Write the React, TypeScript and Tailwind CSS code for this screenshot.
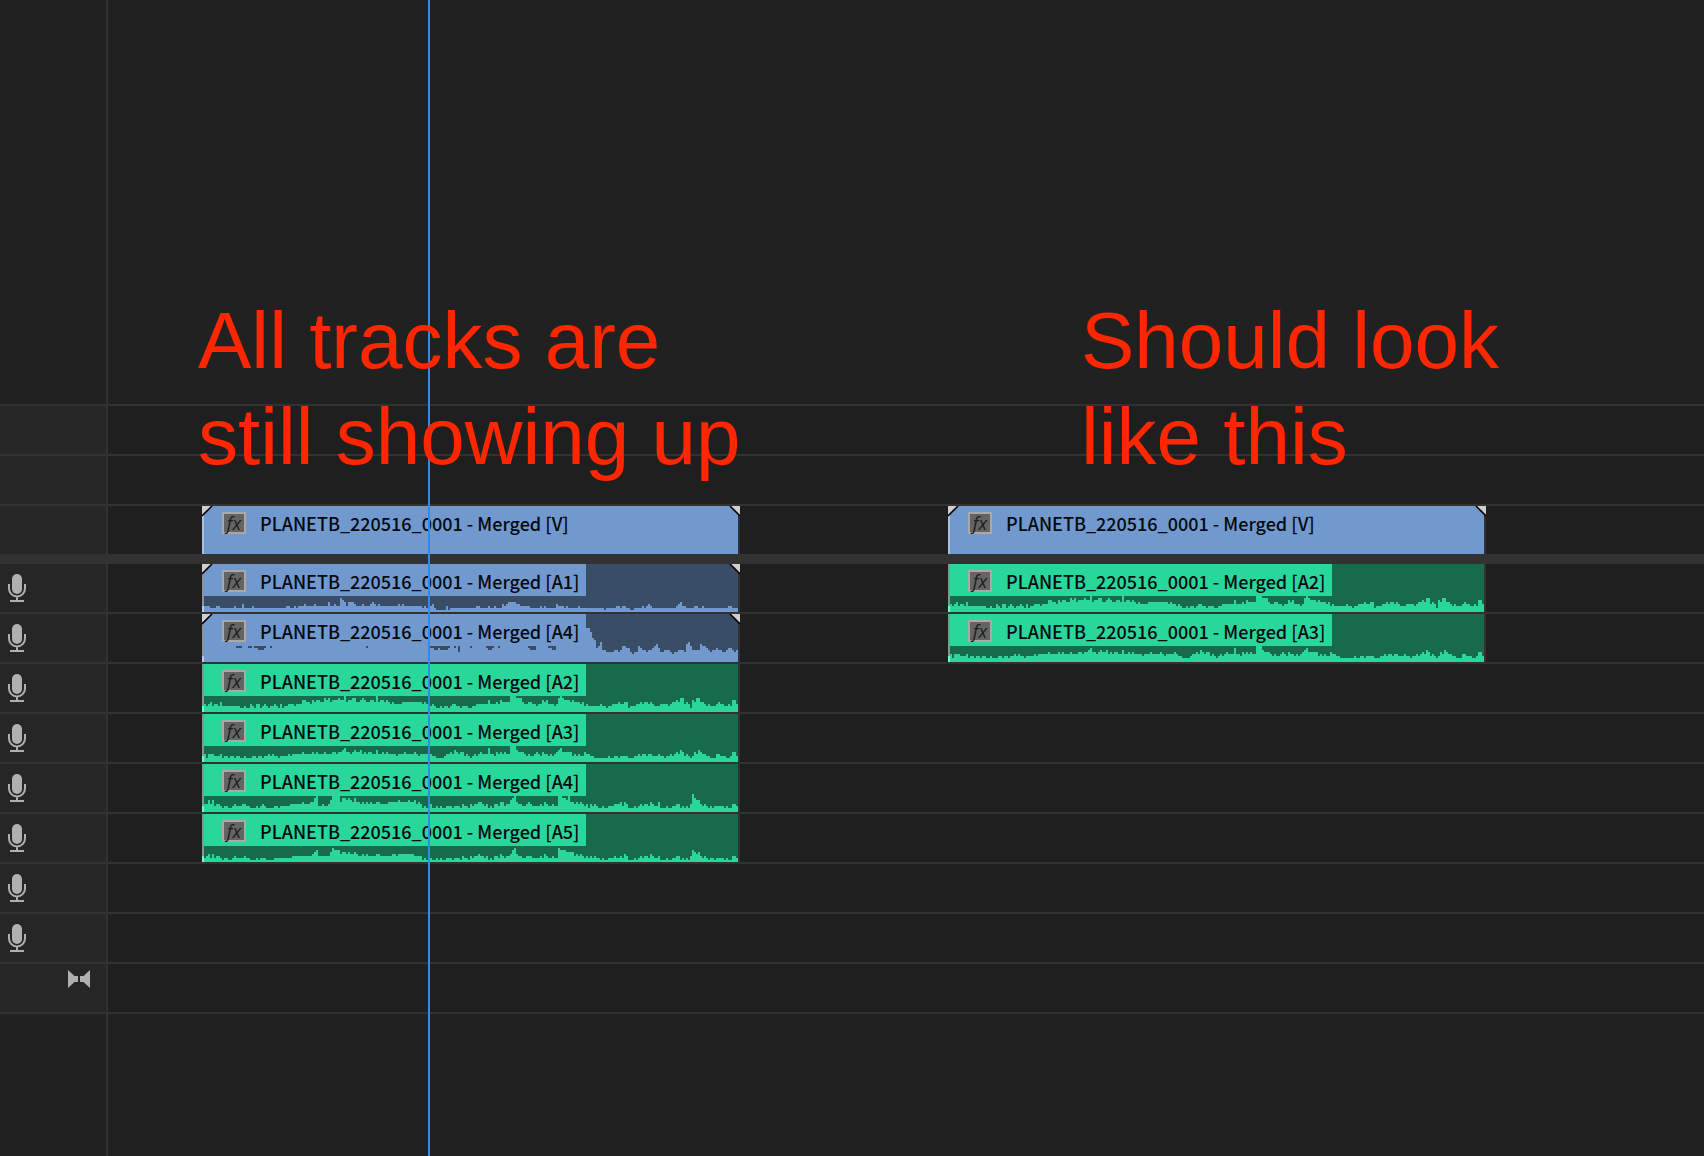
import React from "react";

type ClipColor = "blue" | "green";

interface Clip {
  id: string;
  label: string;
  color: ClipColor;
  handles?: boolean;
  peaks?: string;
}

interface Track {
  id: string;
  clips: Clip[];
  mic?: boolean;
  master?: boolean;
}

// One base-36 digit per waveform column, grouped in tens to keep them readable
const PEAKS_A1 = `
  3332223322 2222232224 2222322222 2222222222 2332232333 4333343333 3353343376 5355543334 3334543433 3333333434
  3333333332 3223421111 1312222222 222
  2223322223 2232224345 5554433333 2222232322 2224333232 2222322222 2222222122 2223323322 1122223234 3222222222
  2223453322 2233223222 2222222223 3222
`;
const PEAKS_A4_BLUE = `
  8888888888 8888887778 8877877666 7887888888 8888888888 8888888888 8888888888 8888888888 8788888888 8888888888
  8888888888 8887766766 6678878588 888
  7888888876 6788788888 8888888887 6668888887 7668888888 88888888hh fcb78a6655 5566568877 5455876656 6789755666
  545566659a 8666698876 5667665567 7656
  5976
`;
const PEAKS_A2 = `
  4345344353 3333333322 3224324423 4323343242 3344434446 6554656655 7675666766 8566775567 6556658566 5654544445
  5555555554 5443432232 3323443323 332
  2334444446 4445465555 8887775445 5443446564 4434787666 5655545343 3333343323 3444544552 3334454554 5433344443
  4556577454 2657755434 3334544334 3664
`;
const PEAKS_A3 = `
  4244433342 3323323322 3222332332 3343433233 3343444445 4444545444 5444554556 7554565564 5455446445 4544443444
  5444454344 4454332222 3445465455 343
  2343454447 4435454544 8886555434 3345435443 4345675555 5343433544 3322222223 2233233332 2233434434 4333433233
  4345465343 2354654433 2224433322 3553
`;
const PEAKS_A4 = `
  4464634432 3322343334 4332223234 3222233233 3334444445 4445578334 3346888857 7676575545 4545445544 4455555655
  5565564542 3234223232 2333233324 332
  4344554342 3244355344 6785443345 4333343543 3433887768 5545454342 4343223223 3344453542 2232343443 5433522232
  2334423232 4976643432 3233333232 2443
`;
const PEAKS_A5 = `
  2342423321 2211232222 3221112122 2111122222 2222333333 3333456333 3335766645 5454454334 3433334433 3333443444
  4444433331 2122112121 1222122213 221
  3233433231 2133243233 4674332233 3222232432 2322766655 5534343232 3232212112 2232232431 1121232332 4322311121
  1223312121 3654532321 2212222121 1332
`;

const clip = (id: string, tag: string, color: ClipColor, peaks?: string, handles?: boolean): Clip => ({
  id,
  label: `PLANETB_220516_0001 - Merged [${tag}]`,
  color,
  peaks,
  handles,
});

const videoTracks: Track[] = [
  { id: "V3", clips: [] },
  { id: "V2", clips: [] },
  { id: "V1", clips: [clip("v-left", "V", "blue", undefined, true), clip("v-right", "V", "blue", undefined, true)] },
];

const audioTracks: Track[] = [
  { id: "A1", mic: true, clips: [clip("a1", "A1", "blue", PEAKS_A1, true), clip("a2-right", "A2", "green", PEAKS_A2)] },
  { id: "A2", mic: true, clips: [clip("a4-blue", "A4", "blue", PEAKS_A4_BLUE, true), clip("a3-right", "A3", "green", PEAKS_A3)] },
  { id: "A3", mic: true, clips: [clip("a2", "A2", "green", PEAKS_A2)] },
  { id: "A4", mic: true, clips: [clip("a3", "A3", "green", PEAKS_A3)] },
  { id: "A5", mic: true, clips: [clip("a4", "A4", "green", PEAKS_A4)] },
  { id: "A6", mic: true, clips: [clip("a5", "A5", "green", PEAKS_A5)] },
  { id: "A7", mic: true, clips: [] },
  { id: "A8", mic: true, clips: [] },
  { id: "Mix", master: true, clips: [] },
];

function MicIcon() {
  return (
    <svg width="18" height="28" viewBox="0 0 18 28" fill="none" aria-hidden="true">
      <rect x="4" y="0" width="10" height="20" rx="5" fill="#b0b0b0" />
      <path d="M1 10v4.500a8 8 0 0 0 16 0V10M9 22.500V27M2 27h14" stroke="#b0b0b0" strokeWidth="2" />
    </svg>
  );
}

function MasterIcon() {
  return (
    <svg width="22" height="18" viewBox="0 0 22 18" fill="#b0b0b0" aria-hidden="true">
      <path d="M0 0l6.500 6H10v6H6.500L0 18z" />
      <path d="M22 0l-6.500 6H12v6h3.500L22 18z" />
    </svg>
  );
}

function Waveform({ peaks, color }: { peaks: string; color: ClipColor }) {
  const levels = peaks.replace(/\s/g, "").slice(0, 267).split("");
  const d = levels.map((c, i) => `M${i} 24v-${parseInt(c, 36)}h1v${parseInt(c, 36)}z`).join("");
  return (
    <svg
      className={`absolute inset-0 h-full w-full ${color === "blue" ? "fill-[#7199cd]" : "fill-[#2ad79b]"}`}
      viewBox="0 0 267 24"
      preserveAspectRatio="none"
      shapeRendering="crispEdges"
      aria-hidden="true"
    >
      <path d={d} />
    </svg>
  );
}

function Handle({ side }: { side: "left" | "right" }) {
  return (
    <svg
      className={`absolute top-0 h-[11px] w-[11px] ${side === "left" ? "left-0" : "right-0 -scale-x-100"}`}
      viewBox="0 0 11 11"
      aria-hidden="true"
    >
      <path d="M0 0h10L0 10z" fill="#cfcfcf" />
      <path d="M0 10L10 0" stroke="#000" strokeWidth="1.600" />
    </svg>
  );
}

function ClipView({ clip }: { clip: Clip }) {
  const blue = clip.color === "blue";
  const base = clip.peaks ? (blue ? "bg-[#3a4d66]" : "bg-[#176b4b]") : "bg-[#7199cd]";
  const edge = clip.peaks ? (blue ? "border-l-[#8a93a0]" : "border-l-[#7f9a8c]") : "border-l-[#a9bfdf]";

  return (
    <div className="relative h-12 w-[538px] shrink-0">
      <div className={`relative h-full border-x-2 border-r-[#323232] ${edge}`}>
        <div className={`relative h-full overflow-hidden ${base}`}>
          {clip.peaks && <Waveform peaks={clip.peaks} color={clip.color} />}
          <div
            className={`relative flex h-8 w-[382px] items-start gap-[14px] pl-[18px] ${
              blue ? "bg-[#7199cd]" : "bg-[#2ad79b]"
            }`}
          >
            <span className="mt-[6px] flex h-[22px] w-6 items-center justify-center border-2 border-[#a9aaa8] bg-[#646464] font-['Open_Sans',sans-serif] text-[18px] leading-[18px] text-[#1c1c1c] italic">
              fx
            </span>
            <span className="font-['Noto_Sans_CJK_SC',sans-serif] text-[18px] leading-[34px] font-medium whitespace-nowrap text-[#050a10]">
              {clip.label}
            </span>
          </div>
        </div>
      </div>
      {clip.peaks && <div className={`absolute bottom-0 left-0 h-[6px] w-[2px] ${blue ? "bg-[#b5cbec]" : "bg-[#7df0c4]"}`} />}
      {clip.handles && (
        <>
          <Handle side="left" />
          <Handle side="right" />
        </>
      )}
    </div>
  );
}

function TrackRow({ track, line }: { track: Track; line: "top" | "bottom" }) {
  return (
    <div className={`flex border-[#323232] ${line === "top" ? "border-t-2" : "border-b-2"}`}>
      <div className="flex h-12 w-[108px] shrink-0 items-start justify-between border-r-2 border-[#323232] bg-[#262626] pl-2 pr-4">
        {track.mic && (
          <button type="button" aria-label={`Voice-over record ${track.id}`} className="mt-[10px]">
            <MicIcon />
          </button>
        )}
        {track.master && (
          <button type="button" aria-label="Mix track" className="mt-[6px] ml-auto">
            <MasterIcon />
          </button>
        )}
      </div>
      <div className="flex min-w-0 flex-1 gap-[208px] overflow-hidden bg-[#1f1f1f] pl-[94px]">
        {track.clips.map((c) => (
          <ClipView key={c.id} clip={c} />
        ))}
      </div>
    </div>
  );
}

export default function App() {
  return (
    <main className="relative flex min-h-screen flex-col overflow-hidden bg-[#212121]">
      <div className="h-[404px] w-[108px] border-r-2 border-[#323232]" />

      <section aria-label="Video tracks">
        {videoTracks.map((t) => (
          <TrackRow key={t.id} track={t} line="top" />
        ))}
      </section>
      <div className="h-[10px] bg-[#323232]" />
      <section aria-label="Audio tracks">
        {audioTracks.map((t) => (
          <TrackRow key={t.id} track={t} line="bottom" />
        ))}
      </section>

      <div className="w-[108px] flex-1 border-r-2 border-[#323232]" />

      {/* Playhead */}
      <div className="absolute inset-y-0 left-[428px] w-[2px] bg-[#2d8ceb]" />

      {/* Notes on top of the timeline */}
      <p className="absolute top-[293px] left-[198px] font-['Liberation_Sans',sans-serif] text-[80px] leading-[96px] whitespace-nowrap text-[#ff2600]">
        All tracks are
        <br />
        still showing up
      </p>
      <p className="absolute top-[293px] left-[1081px] font-['Liberation_Sans',sans-serif] text-[80px] leading-[96px] whitespace-nowrap text-[#ff2600]">
        Should look
        <br />
        like this
      </p>
    </main>
  );
}
